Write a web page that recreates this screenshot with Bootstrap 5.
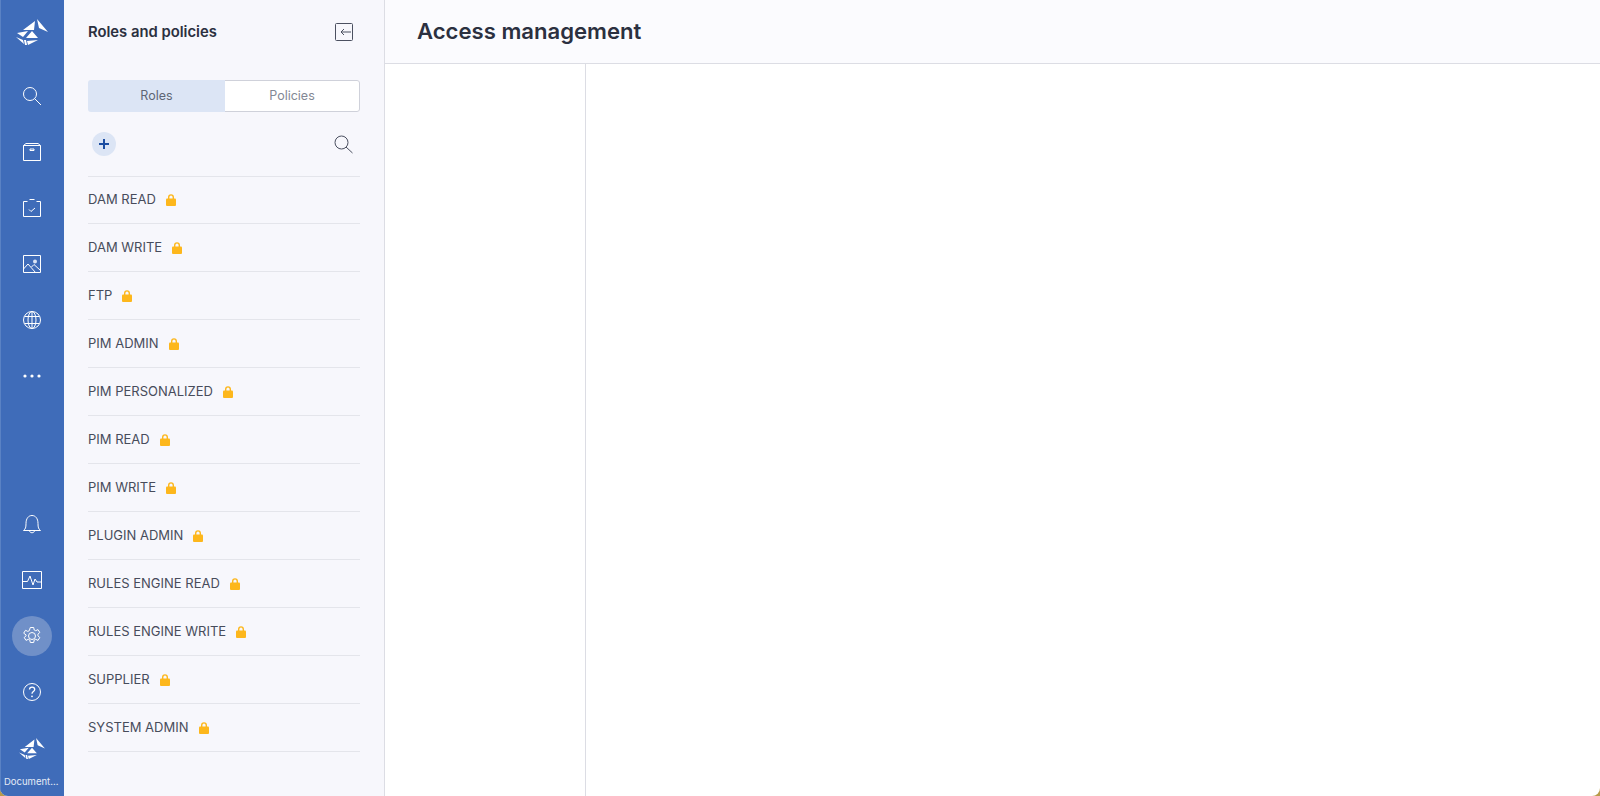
<!DOCTYPE html>
<html lang="en">
  <head>
    <meta charset="UTF-8" />
    <title>Access management</title>
    <link href="https://cdn.jsdelivr.net/npm/bootstrap@5.3.0/dist/css/bootstrap.min.css" rel="stylesheet" />
    <style>
      html, body { height: 100%; }
      body {
        font-family: "Inter", "Liberation Sans", sans-serif;
        color: #2b3040;
        background: #b89b4a;
        overflow: hidden;
      }
      .app-shell {
        height: 796px;
        background: #fff;
        border-radius: 0 0 8px 8px;
        overflow: hidden;
      }

      .rail {
        width: 64px;
        background: #3f6cb9;
        box-shadow: inset 1px 0 0 #5a82c4;
        color: #fff;
      }
      .rail-item {
        height: 56px;
        width: 100%;
      }
      .rail-logo { height: 64px; margin-bottom: 4px; }
      .rail-round {
        width: 40px;
        height: 40px;
        border-radius: 50%;
      }
      .rail-round.is-active { background: #7090c8; }
      .rail-caption {
        font-size: 9.5px;
        line-height: 12px;
        color: #e4ebf6;
        height: 20px;
        padding-left: 4px;
        white-space: nowrap;
      }
      .rail svg, .side-panel svg { display: block; }

      .side-panel {
        width: 321px;
        background: #f7f7fc;
        border-right: 1px solid #dcdde4;
        padding: 0 24px;
      }
      .panel-head { height: 64px; padding-right: 7px; }
      .panel-title { font-size: 14.8px; font-weight: 600; margin: 2px 0 0; color: #2b3040; }
      .seg-switch {
        margin-top: 16px;
        height: 32px;
        font-size: 12.5px;
        width: 272px;
        border-radius: 3px;
        overflow: hidden;
      }
      .seg-on {
        width: 137px;
        background: #dce5f5;
        color: #5f6675;
      }
      .seg-off {
        flex: 1;
        background: #fff;
        color: #838895;
        border: 1px solid #cfd1da;
        border-left: 0;
        border-radius: 0 3px 3px 0;
      }
      .tool-row { height: 64px; padding: 0 7px 0 4px; }
      .add-btn {
        width: 24px;
        height: 24px;
        border-radius: 50%;
        background: #dce5f5;
      }
      .role-list { width: 272px; border-top: 1px solid #e4e5eb; }
      .role-row {
        height: 48px;
        border-bottom: 1px solid #e4e5eb;
        font-size: 13px;
        color: #474c5b;
        gap: 10px;
      }
      .role-row:first-child { height: 47px; }

      .main-head {
        height: 64px;
        background: #fbfbfe;
        border-bottom: 1px solid #dcdde4;
        padding: 0 32px;
      }
      .main-title { font-size: 22.1px; font-weight: 600; margin: 0; color: #2b3040; }
      .sub-col { width: 201px; border-right: 1px solid #dcdde4; }
    </style>
  </head>
  <body>
    <svg width="0" height="0" class="position-absolute">
      <defs>
        <symbol id="logo" viewBox="0 0 32 26">
          <path fill="#fff" d="M7 11 19 2 18 11ZM1 14 12 12 7 18ZM21 0 32 13 23 9ZM16 12 22 19 10 19ZM0 18 7 21 8 25ZM8 21 10 21 11 26 9 26ZM11 22 22 21 12 26Z" />
        </symbol>
      </defs>
    </svg>

    <div class="app-shell d-flex">
      <nav class="rail d-flex flex-column flex-shrink-0">
        <div class="rail-logo d-flex align-items-center justify-content-center">
          <svg width="32" height="26"><use href="#logo" /></svg>
        </div>
        <div class="rail-item d-flex align-items-center justify-content-center">
          <svg width="20" height="20" viewBox="0 0 20 20" fill="none" stroke="#fff" stroke-width="1"><circle cx="8" cy="8" r="6.500" /><path d="M12.500 12.500l6.500 6.500" /></svg>
        </div>
        <div class="rail-item d-flex align-items-center justify-content-center">
          <svg width="20" height="20" viewBox="0 0 20 20" fill="none" stroke="#fff" stroke-width="1"><path d="M1.500 3.500h17v15h-17zM1.500 3.500 4 1.500h12l2.500 2M8 7h4v1.500H8z" /></svg>
        </div>
        <div class="rail-item d-flex align-items-center justify-content-center">
          <svg width="20" height="20" viewBox="0 0 20 20" fill="none" stroke="#fff" stroke-width="1"><path d="M5.500 3.500h-4v15h17v-15h-4M7.500 1.500h5M7 11.500l2 2 4-3.500" /></svg>
        </div>
        <div class="rail-item d-flex align-items-center justify-content-center">
          <svg width="20" height="20" viewBox="0 0 20 20" fill="none" stroke="#fff" stroke-width="1"><path d="M1.500 1.500h17v17h-17zM1.500 15l4.500-5 7.500 8.500M9.500 13l2.500-2.500 6.500 6" /><circle cx="13" cy="7.500" r="2" fill="#dbe4f4" stroke="none" /></svg>
        </div>
        <div class="rail-item d-flex align-items-center justify-content-center">
          <svg width="20" height="20" viewBox="0 0 20 20" fill="none" stroke="#fff" stroke-width="1"><circle cx="10" cy="10" r="8.500" /><ellipse cx="10" cy="10" rx="4" ry="8.500" /><path d="M10 1.500v17M2.500 6.500h15M2.500 13.500h15" /></svg>
        </div>
        <div class="rail-item d-flex align-items-center justify-content-center">
          <svg width="18" height="4" viewBox="0 0 18 4" fill="#fff"><circle cx="2" cy="2" r="1.600" /><circle cx="9" cy="2" r="1.600" /><circle cx="16" cy="2" r="1.600" /></svg>
        </div>

        <div class="mt-auto rail-item d-flex align-items-center justify-content-center">
          <svg width="20" height="20" viewBox="0 0 20 20" fill="none" stroke="#fff" stroke-width="1"><path d="M1.500 16.500c2-1.500 2.500-3 2.500-7C4 4.500 6.500 1.500 10 1.500s6 3 6 8c0 4 .5 5.500 2.500 7zM7.500 16.500c0 3 5 3 5 0" /></svg>
        </div>
        <div class="rail-item d-flex align-items-center justify-content-center">
          <svg width="20" height="20" viewBox="0 0 20 20" fill="none" stroke="#fff" stroke-width="1"><path d="M.5 1.500h19v17H.5zM.5 11.500h5L8 6l3 9 2-6 2 3h4.500" /></svg>
        </div>
        <div class="rail-item d-flex align-items-center justify-content-center">
          <div class="rail-round is-active d-flex align-items-center justify-content-center">
            <svg width="20" height="20" viewBox="0 0 20 20" fill="none" stroke="#fff" stroke-width="1"><circle cx="10" cy="10" r="3.500" /><path d="M8.300 1.500h3.400l.5 2.500 1.500.7 2.300-1.100 1.800 2.900-1.900 1.700v1.600l1.900 1.700-1.800 2.900-2.300-1.100-1.500.7-.5 2.500H8.300l-.5-2.500-1.500-.7-2.300 1.100-1.800-2.900 1.900-1.700V8.900L1.700 7.200l1.800-2.900 2.300 1.100 1.500-.7z" /></svg>
          </div>
        </div>
        <div class="rail-item d-flex align-items-center justify-content-center">
          <svg width="20" height="20" viewBox="0 0 20 20" fill="none" stroke="#fff" stroke-width="1"><circle cx="10" cy="10" r="8.500" /><path d="M7.500 7.500c0-3.200 5.200-3.200 5.200 0 0 2-2.700 2-2.700 4.200" stroke-width="1.300" /><circle cx="10" cy="14.300" r=".9" fill="#fff" stroke="none" /></svg>
        </div>
        <div class="rail-item d-flex align-items-center justify-content-center">
          <svg width="26" height="21"><use href="#logo" /></svg>
        </div>
        <div class="rail-caption">Document...</div>
      </nav>

      <aside class="side-panel flex-shrink-0">
        <div class="panel-head d-flex align-items-center justify-content-between">
          <h2 class="panel-title">Roles and policies</h2>
          <svg width="18" height="18" viewBox="0 0 18 18" fill="none" stroke="#4b5060" stroke-width="1"><rect x=".5" y=".5" width="17" height="17" rx="1" /><path d="M16 9H6M9 6 6 9l3 3" /></svg>
        </div>
        <div class="seg-switch d-flex">
          <div class="seg-on d-flex align-items-center justify-content-center">Roles</div>
          <div class="seg-off d-flex align-items-center justify-content-center">Policies</div>
        </div>
        <div class="tool-row d-flex align-items-center justify-content-between">
          <div class="add-btn d-flex align-items-center justify-content-center">
            <svg width="10" height="10" viewBox="0 0 10 10" stroke="#1c4da1" stroke-width="2"><path d="M5 0v10M0 5h10" /></svg>
          </div>
          <svg width="19" height="19" viewBox="0 0 19 19" fill="none" stroke="#4b5060" stroke-width="1"><circle cx="7.500" cy="7.500" r="6.500" /><path d="M12 12l6.500 6" /></svg>
        </div>
        <div class="role-list" id="role-list"></div>
      </aside>

      <main class="flex-grow-1 d-flex flex-column">
        <header class="main-head d-flex align-items-center">
          <h1 class="main-title">Access management</h1>
        </header>
        <div class="flex-grow-1 d-flex">
          <div class="sub-col"></div>
        </div>
      </main>
    </div>

    <script src="https://cdn.jsdelivr.net/npm/bootstrap@5.3.0/dist/js/bootstrap.bundle.min.js"></script>
    <script>
      const roles = ["DAM READ", "DAM WRITE", "FTP", "PIM ADMIN", "PIM PERSONALIZED", "PIM READ", "PIM WRITE", "PLUGIN ADMIN", "RULES ENGINE READ", "RULES ENGINE WRITE", "SUPPLIER", "SYSTEM ADMIN"];
      const lock = '<svg width="10" height="12" viewBox="0 0 10 12"><path fill="none" stroke="#fdb71c" stroke-width="1.400" d="M2.700 5V3.200a2.300 2.300 0 0 1 4.600 0V5" /><rect y="4.500" width="10" height="7.500" rx="1" fill="#fdb71c" /></svg>';
      document.getElementById("role-list").innerHTML = roles
        .map((r) => `<div class="role-row d-flex align-items-center"><span>${r}</span>${lock}</div>`)
        .join("");
    </script>
  </body>
</html>
